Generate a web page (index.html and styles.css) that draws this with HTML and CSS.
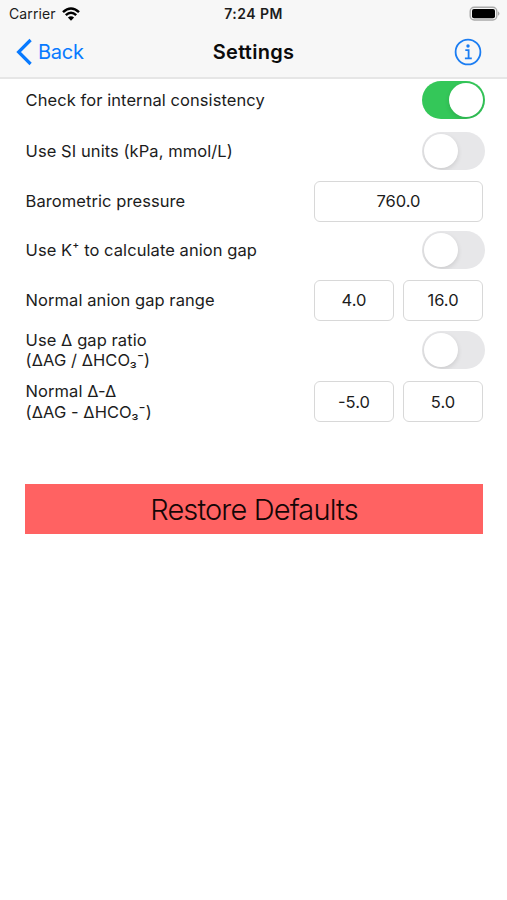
FILE: index.html
```html
<!DOCTYPE html>
<html lang="en">
<head>
<meta charset="utf-8">
<title>Settings</title>
<link rel="stylesheet" href="styles.css">
</head>
<body>
<header class="header">
  <div class="status">
    <div class="carrier"><span>Carrier</span>
      <svg class="wifi" width="18" height="14" viewBox="0 0 18 14" fill="none" stroke="#000" stroke-width="2.5"><path d="M1 5.2Q9-2.2 17 5.2M3.8 8.2Q9 3.4 14.2 8.2"/><path d="M9 13.8L5.9 10.6Q9 7.9 12.1 10.6Z" fill="#000" stroke="none"/></svg>
    </div>
    <div class="time">7:24 PM</div>
    <svg class="battery" width="32" height="16" viewBox="0 0 32 16"><rect x="1.2" y="1.2" width="26.6" height="12.8" rx="4" fill="#f6f6f6" stroke="#aaa" stroke-width="1.4"/><rect x="3" y="3" width="23" height="9.2" rx="2" fill="#000"/><path d="M29 5.2Q32 7.5 29 9.8Z" fill="#aaa"/></svg>
  </div>
  <nav class="nav">
    <a class="back"><svg width="17" height="28" viewBox="0 0 17 28" fill="none" stroke="#087aff" stroke-width="3.2"><path d="M14.6 2L2.6 14L14.6 26"/></svg><span>Back</span></a>
    <h1 class="title">Settings</h1>
    <svg class="info" width="28" height="28" viewBox="0 0 28 28" fill="none" stroke="#1b7df2" stroke-width="1.8"><circle cx="14" cy="14" r="12.4"/><circle cx="14" cy="8" r="1.7" fill="#1b7df2" stroke="none"/><path d="M11.3 12.2H14.6V20.4M10.9 20.4H17.8"/></svg>
  </nav>
</header>
<main class="settings">
  <div class="row row-first"><span class="label">Check for internal consistency</span><span class="switch on"></span></div>
  <div class="row"><span class="label">Use SI units (kPa, mmol/L)</span><span class="switch"></span></div>
  <div class="row row-tight"><span class="label">Barometric pressure</span><div class="fields"><span class="field">760.0</span></div></div>
  <div class="row"><span class="label">Use K⁺ to calculate anion gap</span><span class="switch"></span></div>
  <div class="row"><span class="label">Normal anion gap range</span><div class="fields"><span class="field">4.0</span><span class="field">16.0</span></div></div>
  <div class="row"><span class="label">Use Δ gap ratio<br>(ΔAG / ΔHCO₃⁻)</span><span class="switch"></span></div>
  <div class="row row-last"><span class="label">Normal Δ-Δ<br>(ΔAG - ΔHCO₃⁻)</span><div class="fields"><span class="field">-5.0</span><span class="field">5.0</span></div></div>
  <div class="restore"><span>Restore Defaults</span></div>
</main>
</body>
</html>
```
FILE: styles.css
```css
* { box-sizing: border-box; }
body { margin: 0; background: #fff; color: #1c1c1c; font-family: Inter, "Liberation Sans", sans-serif; }
.header { height: 79px; background: #f7f7f7; border-bottom: 2px solid #e6e6e6; }
.status { height: 27px; display: grid; grid-template-columns: 1fr auto 1fr; align-items: center; padding: 0 6px; font-size: 14px; }
.carrier { display: flex; align-items: center; gap: 6px; padding-left: 3px; letter-spacing: .1px; }
.time { font-weight: 600; letter-spacing: .45px; }
.battery { justify-self: end; }
.nav { height: 50px; display: grid; grid-template-columns: 1fr auto 1fr; align-items: center; padding: 0 25px; }
.back { display: flex; align-items: center; gap: 5px; margin-left: -9px; color: #087aff; font-size: 20px; letter-spacing: -.25px; }
.title { margin: 0; font-size: 20px; font-weight: 600; letter-spacing: .25px; color: #0b0b0b; }
.info { justify-self: end; }
.settings { display: flex; flex-direction: column; gap: 8px; padding: 0 24px 0 25px; }
.row { height: 42px; display: flex; align-items: center; justify-content: space-between; }
.row-first { margin-bottom: 1px; }
.row-tight { margin-bottom: -1px; }
.row-last { margin-top: 1.5px; }
.label { padding-left: .6px; font-size: 16.5px; line-height: 20.5px; letter-spacing: .07px; white-space: nowrap; }
.switch { width: 63px; height: 38px; border-radius: 19px; background: #e7e7e9; padding: 2px; margin-right: -2px; display: flex; overflow: hidden; }
.switch::before { content: ""; width: 34px; height: 34px; border-radius: 50%; background: #fff; box-shadow: 0 2px 5px rgba(0, 0, 0, .12); }
.switch.on { background: #34c759; justify-content: flex-end; }
.fields { width: 169px; height: 41px; display: flex; gap: 9px; }
.field { flex: 1; border: 1.5px solid #d8d8d8; border-radius: 6px; display: flex; align-items: center; justify-content: center; font-size: 16.5px; }
.restore { height: 50px; margin-top: 53.5px; background: #ff6262; color: #140606; display: flex; align-items: center; justify-content: center; font-size: 29px; font-weight: 300; letter-spacing: -.85px; }
```
